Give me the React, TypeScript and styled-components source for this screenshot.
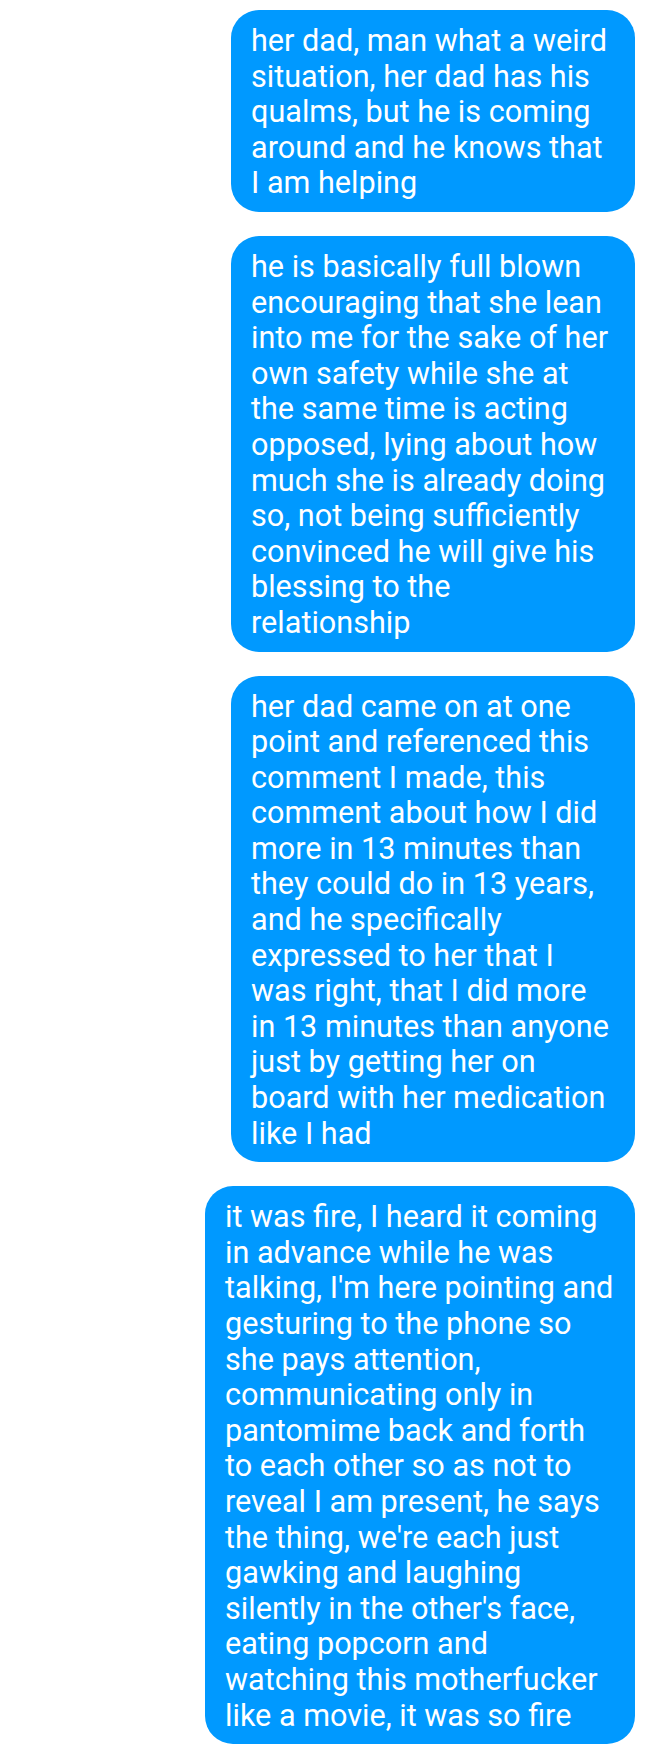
import React from "react";
import styled, { createGlobalStyle } from "styled-components";

const Global = createGlobalStyle`
  html, body { margin: 0; padding: 0; background: #ffffff; }
  body { font-family: Roboto, "Noto Sans", "Liberation Sans", sans-serif; }
`;

const Thread = styled.div`
  display: flex;
  flex-direction: column;
  align-items: flex-end;
  gap: 24px;
  padding: 10px 13px 14px 0;
  width: 648px;
  box-sizing: border-box;
`;

const Bubble = styled.div<{ $w: number }>`
  width: ${(p) => p.$w}px;
  box-sizing: border-box;
  background: #0099ff;
  color: #ffffff;
  border-radius: 28px;
  padding: 13px 10px 11px 20px;
  font-size: 30.6px;
  line-height: 35.6px;
  font-weight: 400;
`;

const Line = styled.span`
  display: block;
  white-space: nowrap;
`;

const messages: { w: number; lines: string[] }[] = [
  {
    w: 404,
    lines: [
      "her dad, man what a weird",
      "situation, her dad has his",
      "qualms, but he is coming",
      "around and he knows that",
      "I am helping",
    ],
  },
  {
    w: 404,
    lines: [
      "he is basically full blown",
      "encouraging that she lean",
      "into me for the sake of her",
      "own safety while she at",
      "the same time is acting",
      "opposed, lying about how",
      "much she is already doing",
      "so, not being sufficiently",
      "convinced he will give his",
      "blessing to the",
      "relationship",
    ],
  },
  {
    w: 404,
    lines: [
      "her dad came on at one",
      "point and referenced this",
      "comment I made, this",
      "comment about how I did",
      "more in 13 minutes than",
      "they could do in 13 years,",
      "and he specifically",
      "expressed to her that I",
      "was right, that I did more",
      "in 13 minutes than anyone",
      "just by getting her on",
      "board with her medication",
      "like I had",
    ],
  },
  {
    w: 430,
    lines: [
      "it was fire, I heard it coming",
      "in advance while he was",
      "talking, I'm here pointing and",
      "gesturing to the phone so",
      "she pays attention,",
      "communicating only in",
      "pantomime back and forth",
      "to each other so as not to",
      "reveal I am present, he says",
      "the thing, we're each just",
      "gawking and laughing",
      "silently in the other's face,",
      "eating popcorn and",
      "watching this motherfucker",
      "like a movie, it was so fire",
    ],
  },
];

export default function App() {
  return (
    <>
      <Global />
      <Thread>
        {messages.map((m, i) => (
          <Bubble key={i} $w={m.w}>
            {m.lines.map((l, j) => (
              <Line key={j}>{l}</Line>
            ))}
          </Bubble>
        ))}
      </Thread>
    </>
  );
}
